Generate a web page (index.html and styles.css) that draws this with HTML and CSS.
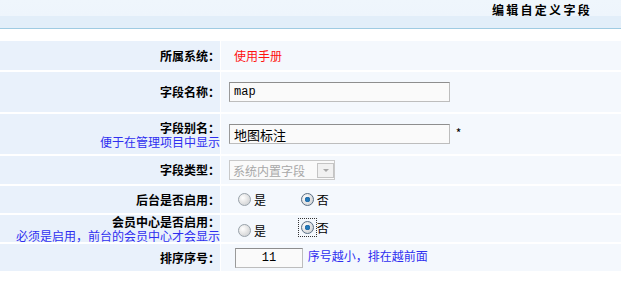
FILE: index.html
```html
<!DOCTYPE html>
<html lang="zh-CN">

<head>
    <meta charset="UTF-8">
    <title>编辑自定义字段</title>
    <link rel="stylesheet" href="styles.css">
</head>

<body>
    <div class="title-bar">
        <span class="title">编辑自定义字段</span>
    </div>

    <table class="form-table">
        <tr class="row-28">
            <th>所属系统：</th>
            <td><span class="system-name">使用手册</span></td>
        </tr>
        <tr class="row-40">
            <th>字段名称：</th>
            <td><input type="text" class="text-input mono" value="map"></td>
        </tr>
        <tr class="row-40">
            <th>字段别名：<span class="hint">便于在管理项目中显示</span></th>
            <td><input type="text" class="text-input" value="地图标注"> <span class="star">*</span></td>
        </tr>
        <tr class="row-28">
            <th>字段类型：</th>
            <td>
                <span class="fake-select">
                    <span class="select-text">系统内置字段</span>
                    <span class="select-btn"><span class="arrow"></span></span>
                </span>
            </td>
        </tr>
        <tr class="row-27">
            <th>后台是否启用：</th>
            <td>
                <label class="radio-item"><input type="radio" name="admin">是</label>
                <label class="radio-item"><input type="radio" name="admin" checked>否</label>
            </td>
        </tr>
        <tr class="row-27">
            <th>会员中心是否启用：<span class="hint">必须是启用，前台的会员中心才会显示</span></th>
            <td>
                <label class="radio-item"><input type="radio" name="member">是</label>
                <label class="radio-item focused"><span class="focus-box"><input type="radio" name="member" checked></span>否</label>
            </td>
        </tr>
        <tr class="row-27">
            <th>排序序号：</th>
            <td><input type="text" class="order-input mono" value="11"> <span class="hint">序号越小，排在越前面</span></td>
        </tr>
    </table>
</body>

</html>
```

FILE: styles.css
```css
body {
    margin: 0;
    padding: 0;
    background: #fff;
    font-family: "Noto Sans CJK SC", "DejaVu Sans", sans-serif;
    font-size: 12px;
    color: #000;
}

/* Barra de título */
.title-bar {
    height: 28px;
    line-height: 19px;
    text-align: right;
    padding-right: 29px;
    background: linear-gradient(#eff6fc 0, #eef5fc 16px, #e2eef9 16px, #e2eef9 100%);
    border-bottom: 1px solid #9fcbe2;
    margin-bottom: 12px;
}

.title {
    font-weight: bold;
    letter-spacing: 2.3px;
}

/* Tabla del formulario */
.form-table {
    width: 100%;
    border-collapse: collapse;
}

.form-table th,
.form-table td {
    padding: 0;
    border-bottom: 2px solid #fff;
    vertical-align: middle;
}

.form-table th {
    width: 220px;
    background: #e9f1fb;
    border-right: 1px solid #fff;
    text-align: right;
    font-weight: bold;
    line-height: 14px;
}

.form-table td {
    background: #f4f8fd;
    padding-left: 8px;
}

.row-28 { height: 30px; }
.row-40 { height: 42px; }
.row-27 { height: 29px; }

.hint {
    color: #2f2ff0;
    font-weight: normal;
}

.form-table th .hint {
    display: block;
    line-height: 13px;
    white-space: nowrap;
}

.system-name {
    color: #ff1010;
    margin-left: 5px;
}

.star {
    margin-left: 3px;
}

/* Campos */
.text-input {
    width: 221px;
    height: 20px;
    box-sizing: border-box;
    border: 1px solid #bdbdbd;
    border-top-color: #8e8e8e;
    border-left-color: #9a9a9a;
    background: #fafafa;
    padding: 0 4px;
    font-family: "Noto Sans CJK SC", sans-serif;
    font-size: 13px;
    color: #000;
    vertical-align: middle;
}

.mono {
    font-family: "Liberation Mono", monospace;
    font-size: 12px;
}

.order-input {
    width: 68px;
    height: 20px;
    box-sizing: border-box;
    border: 1px solid #bdbdbd;
    border-top-color: #8e8e8e;
    border-left-color: #9a9a9a;
    background: #fafafa;
    text-align: center;
    margin-left: 6px;
    margin-right: 2px;
    vertical-align: middle;
}

/* Select deshabilitado */
.fake-select {
    display: inline-flex;
    align-items: center;
    width: 106px;
    height: 20px;
    box-sizing: border-box;
    border: 1px solid #c9c9c9;
    background: #fafafa;
    vertical-align: middle;
}

.select-text {
    color: #a8a8a8;
    padding-left: 3px;
    font-size: 12px;
    white-space: nowrap;
    overflow: hidden;
    width: 84px;
}

.select-btn {
    width: 15px;
    height: 13px;
    border: 1px solid #c4c4c4;
    background: #f1f1f1;
    margin-left: 2px;
    display: flex;
    align-items: center;
    justify-content: center;
}

.arrow {
    width: 0;
    height: 0;
    border-left: 3px solid transparent;
    border-right: 3px solid transparent;
    border-top: 3px solid #a8a8a8;
}

/* Radios estilo clásico */
.radio-item {
    display: inline-flex;
    align-items: center;
    margin-left: 9px;
    margin-right: 23px;
}

.radio-item input {
    -webkit-appearance: none;
    appearance: none;
    width: 13px;
    height: 13px;
    margin: 0 3px 0 0;
    border: 1px solid #9aa3ab;
    border-radius: 50%;
    background: radial-gradient(circle at 35% 35%, #ffffff 0, #e6e6e6 45%, #c4c8cc 100%);
    box-sizing: border-box;
    display: block;
}

.radio-item input:checked {
    background:
        radial-gradient(circle at 50% 50%, #1d7fc4 0, #2b6fa8 2.5px, transparent 3px),
        radial-gradient(circle at 35% 35%, #ffffff 0, #e6e6e6 45%, #c4c8cc 100%);
    border-color: #5a6f85;
}

.focus-box {
    display: block;
    border: 1px dotted #333;
    padding: 2px 2px 2px 2px;
    margin-left: -3px;
}

.focus-box input {
    margin: 0;
}
```
